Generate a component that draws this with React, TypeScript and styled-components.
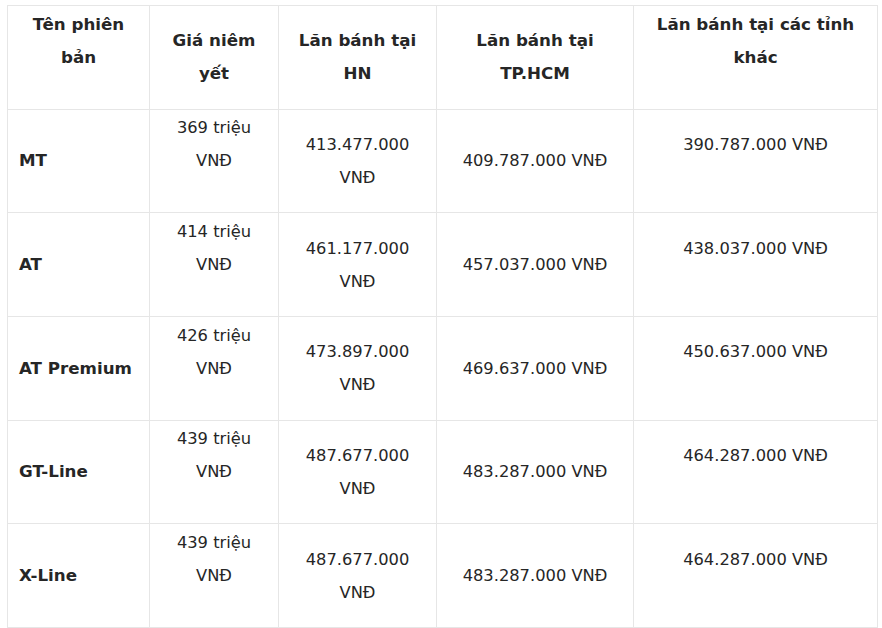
import React from 'react';
import styled, { createGlobalStyle } from 'styled-components';

const GlobalStyle = createGlobalStyle`
    body {
        margin: 0;
        background: #ffffff;
    }
`;

interface Version {
    name: string;
    listed: string;
    hn: string;
    hcm: string;
    other: string;
}

const versions: Version[] = [
    { name: 'MT', listed: '369 triệu', hn: '413.477.000', hcm: '409.787.000 VNĐ', other: '390.787.000 VNĐ' },
    { name: 'AT', listed: '414 triệu', hn: '461.177.000', hcm: '457.037.000 VNĐ', other: '438.037.000 VNĐ' },
    { name: 'AT Premium', listed: '426 triệu', hn: '473.897.000', hcm: '469.637.000 VNĐ', other: '450.637.000 VNĐ' },
    { name: 'GT-Line', listed: '439 triệu', hn: '487.677.000', hcm: '483.287.000 VNĐ', other: '464.287.000 VNĐ' },
    { name: 'X-Line', listed: '439 triệu', hn: '487.677.000', hcm: '483.287.000 VNĐ', other: '464.287.000 VNĐ' },
];

const widths = [142, 129, 158, 197, 244];

export default function App() {
    return (
        <Page>
            <GlobalStyle />
            <Table>
                <colgroup>
                    {widths.map((w, i) => (
                        <col key={i} style={{ width: w }} />
                    ))}
                </colgroup>
                <thead>
                    <tr>
                        <HeadCell $lift>
                            Tên phiên
                            <br />
                            bản
                        </HeadCell>
                        <HeadCell>
                            Giá niêm
                            <br />
                            yết
                        </HeadCell>
                        <HeadCell>
                            Lăn bánh tại
                            <br />
                            HN
                        </HeadCell>
                        <HeadCell>
                            Lăn bánh tại
                            <br />
                            TP.HCM
                        </HeadCell>
                        <HeadCell $lift>
                            Lăn bánh tại các tỉnh
                            <br />
                            khác
                        </HeadCell>
                    </tr>
                </thead>
                <tbody>
                    {versions.map((v) => (
                        <tr key={v.name}>
                            <NameCell>{v.name}</NameCell>
                            <Cell $lift>
                                {v.listed}
                                <br />
                                VNĐ
                            </Cell>
                            <Cell>
                                {v.hn}
                                <br />
                                VNĐ
                            </Cell>
                            <Cell>{v.hcm}</Cell>
                            <Cell $lift>{v.other}</Cell>
                        </tr>
                    ))}
                </tbody>
            </Table>
        </Page>
    );
}

const Page = styled.div`
    padding: 5px 0 0 7px;
    font-family: 'DejaVu Sans', Verdana, sans-serif;
    font-size: 16.3px;
    color: #262626;
`;

const Table = styled.table`
    width: 870px;
    table-layout: fixed;
    border-collapse: collapse;
    border: 1px solid #e6e6e6;
`;

const Cell = styled.td<{ $lift?: boolean }>`
    height: 103.67px;
    padding: 0 6px ${(props) => (props.$lift ? '33px' : '0')};
    border: 1px solid #e6e6e6;
    text-align: center;
    vertical-align: middle;
    line-height: 33px;
    box-sizing: border-box;
`;

const HeadCell = styled(Cell).attrs({ as: 'th' })`
    font-size: 16.7px;
    font-weight: bold;
`;

const NameCell = styled(Cell)`
    text-align: left;
    padding-left: 11px;
    font-size: 16.7px;
    font-weight: bold;
`;
